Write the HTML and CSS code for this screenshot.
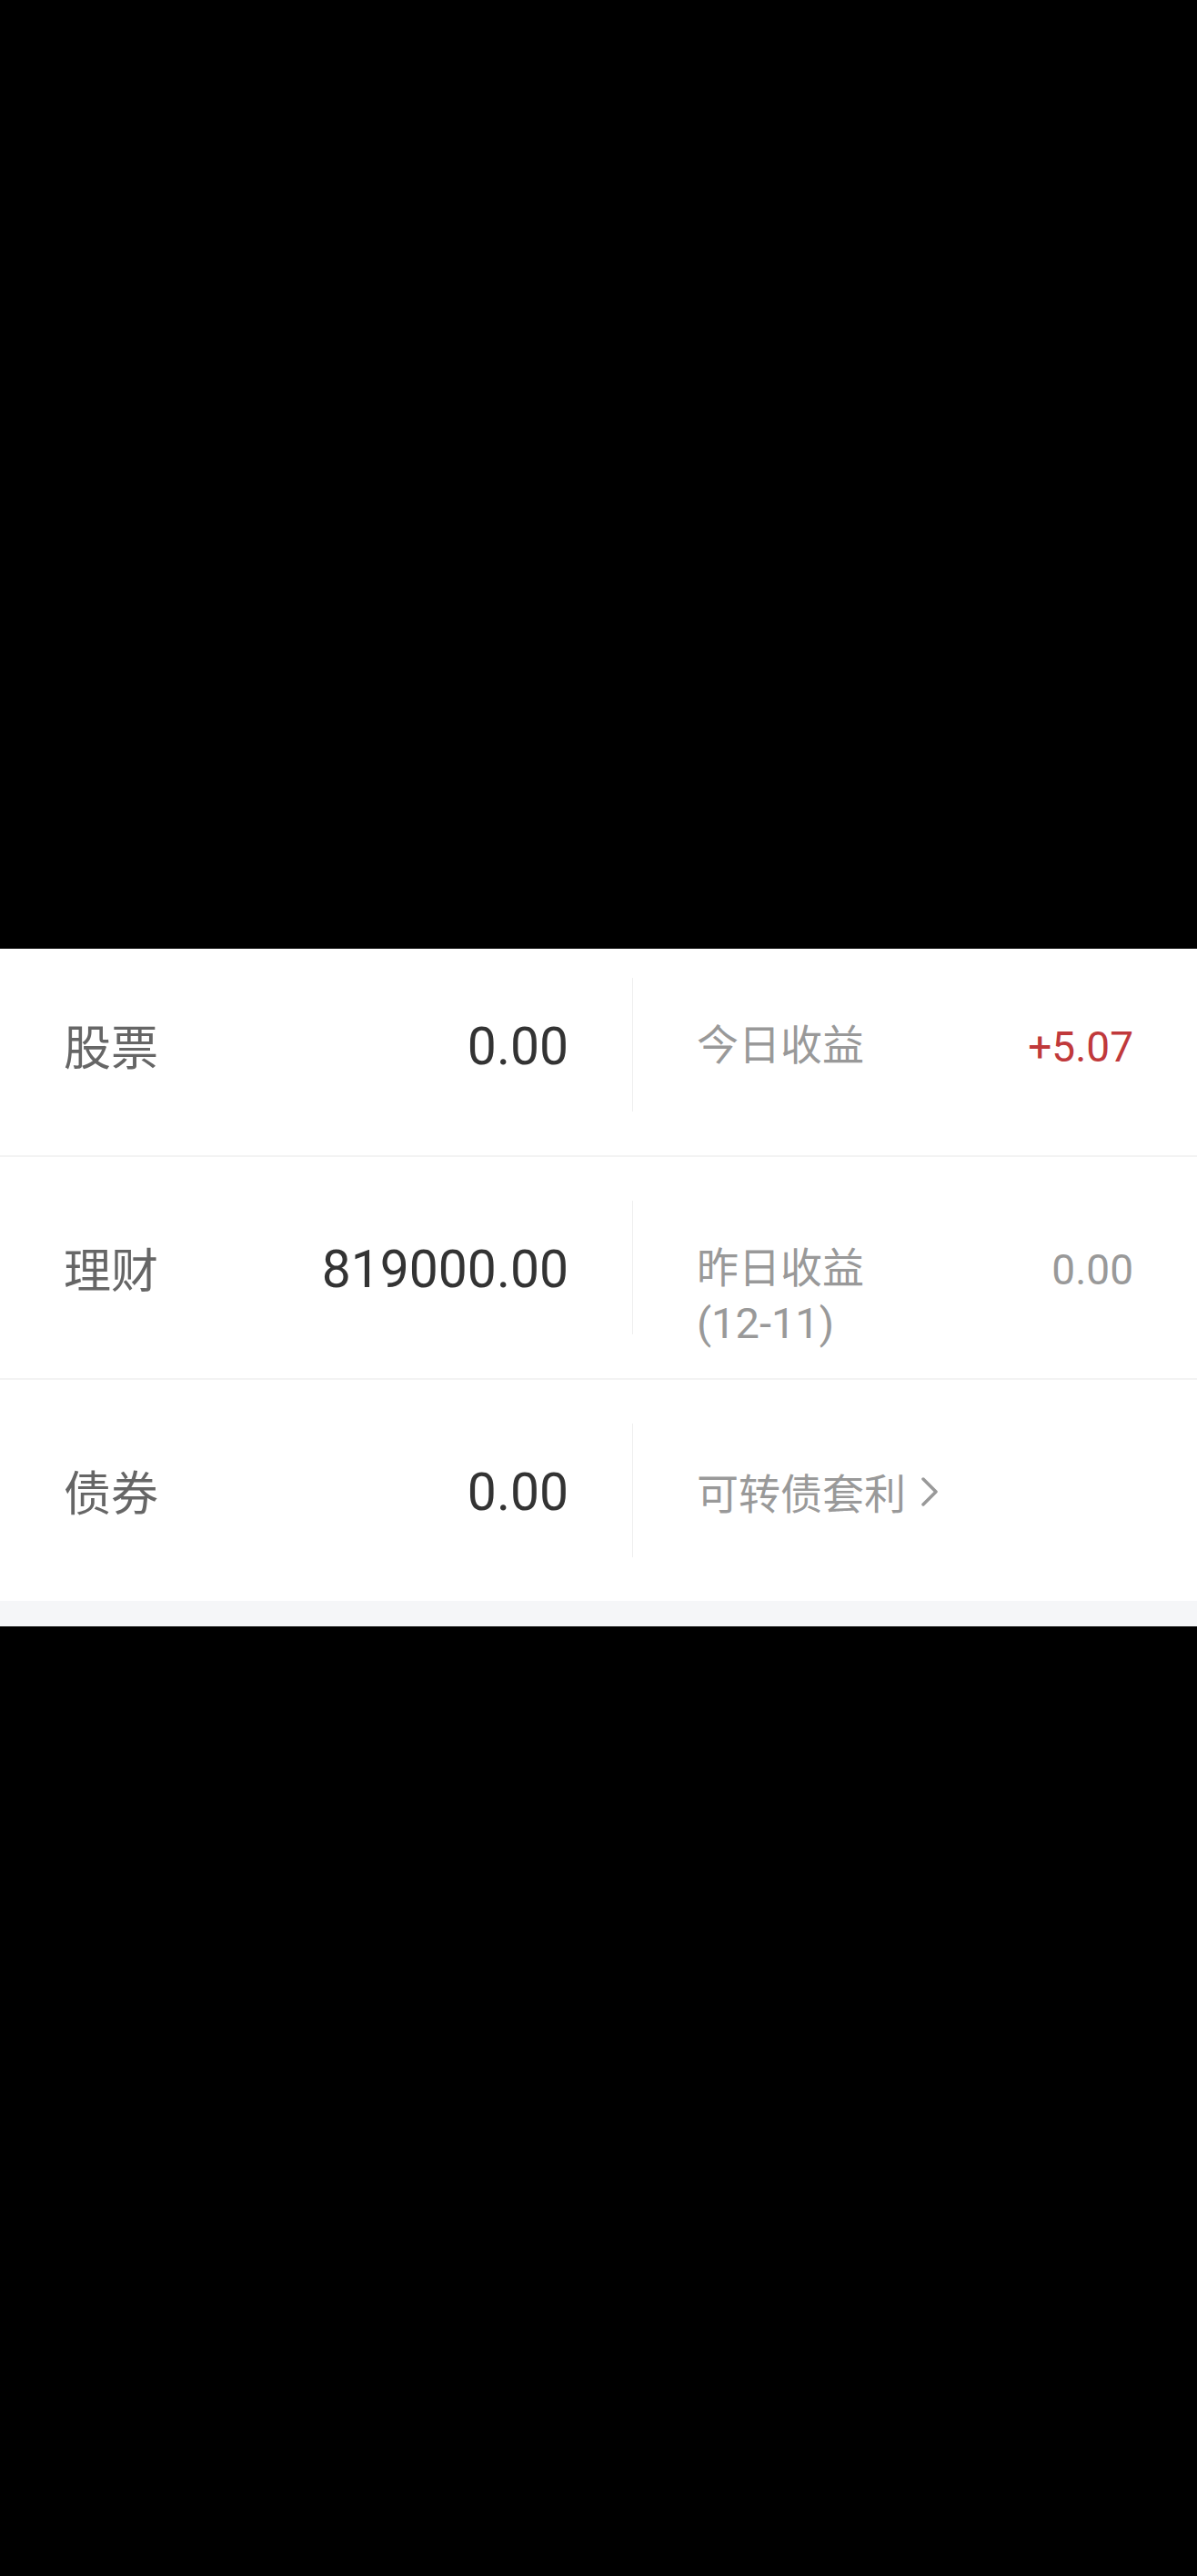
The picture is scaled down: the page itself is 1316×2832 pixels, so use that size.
FILE: index.html
```html
<!DOCTYPE html>
<html lang="zh-CN">
<head>
<meta charset="utf-8">
<title>资产</title>
<link rel="stylesheet" href="styles.css">
</head>
<body>
<div class="backdrop-top"></div>
<section class="assets">
  <div class="row row-first">
    <div class="cell cell-main">
      <span class="label">股票</span>
      <span class="amount">0.00</span>
    </div>
    <div class="cell cell-side">
      <span class="side-label">今日收益</span>
      <span class="side-value up">+5.07</span>
    </div>
  </div>
  <div class="row">
    <div class="cell cell-main">
      <span class="label">理财</span>
      <span class="amount">819000.00</span>
    </div>
    <div class="cell cell-side">
      <span class="side-label">昨日收益<br><span class="date">(12-11)</span></span>
      <span class="side-value">0.00</span>
    </div>
  </div>
  <div class="row row-last">
    <div class="cell cell-main">
      <span class="label">债券</span>
      <span class="amount">0.00</span>
    </div>
    <div class="cell cell-side">
      <span class="side-link">可转债套利<svg class="chevron" width="20" height="34" viewBox="0 0 20 34"><polyline points="3,3 17,17 3,31" fill="none" stroke="#999999" stroke-width="3.5" stroke-linecap="round" stroke-linejoin="round"/></svg></span>
    </div>
  </div>
</section>
<div class="footer-strip"></div>
</body>
</html>
```

FILE: styles.css
```css
html, body {
  margin: 0;
  padding: 0;
  background: #000000;
}

body {
  font-family: Roboto, "Noto Sans CJK SC", sans-serif;
  min-height: 2832px;
}

.backdrop-top {
  height: 1043px;
  background: #000000;
}

.assets {
  background: #ffffff;
}

.row {
  display: grid;
  grid-template-columns: 695px 1fr;
  padding: 48px 0;
  border-bottom: 2px solid #f3f3f3;
}

.row-first {
  padding-top: 32px;
}

.row-last {
  border-bottom: none;
}

.cell {
  box-sizing: border-box;
  height: 147px;
  padding-top: 44px;
  display: flex;
  justify-content: space-between;
  align-items: flex-start;
}

.cell-main {
  padding-left: 70px;
  padding-right: 70px;
}

.cell-side {
  border-left: 1px solid #eeeeee;
  padding-left: 70px;
  padding-right: 70px;
}

.label {
  font-family: "Noto Sans CJK SC", sans-serif;
  font-size: 52px;
  line-height: 60px;
  color: #666666;
}

.amount {
  font-family: Roboto, sans-serif;
  font-size: 57px;
  line-height: 60px;
  margin-top: 2px;
  color: #333333;
}

.side-label {
  font-family: Roboto, "Noto Sans CJK SC", sans-serif;
  font-size: 46px;
  line-height: 60px;
  color: #999999;
}

.date {
  font-size: 47px;
  position: relative;
  top: 1px;
}

.side-value {
  font-family: Roboto, sans-serif;
  font-size: 46px;
  line-height: 60px;
  margin-top: 2px;
  color: #999999;
}

.side-value.up {
  color: #c0393b;
}

.side-link {
  display: flex;
  align-items: center;
  font-family: "Noto Sans CJK SC", sans-serif;
  font-size: 46px;
  line-height: 60px;
  color: #999999;
}

.chevron {
  margin-left: 16px;
  margin-top: 2px;
}

.footer-strip {
  height: 28px;
  background: #f5f6f8;
}
```
